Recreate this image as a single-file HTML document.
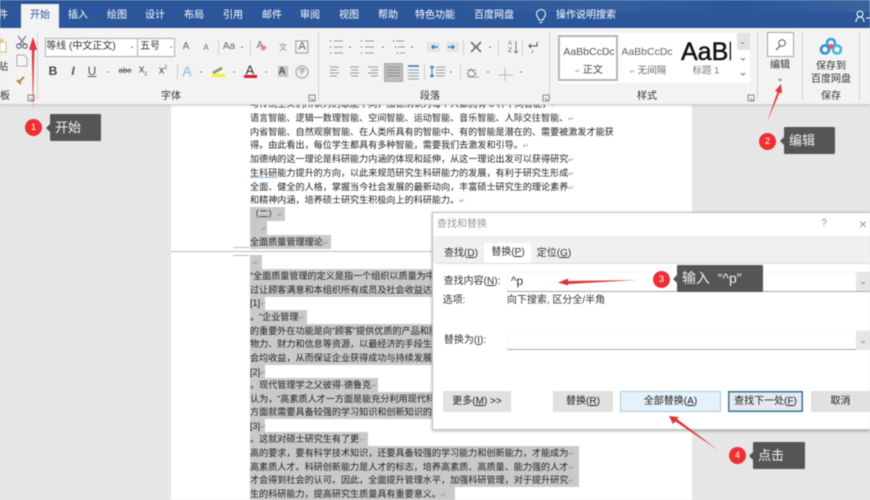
<!DOCTYPE html>
<html lang="zh-CN"><head><meta charset="utf-8">
<style>
html,body{margin:0;padding:0;width:870px;height:500px;overflow:hidden;background:#e6e6e6}
body{font-family:"Liberation Sans","Noto Sans CJK SC",sans-serif;position:relative}
#w{position:absolute;left:0;top:0;width:870px;height:500px;overflow:hidden;filter:blur(.45px)}
.a{position:absolute}
.t{position:absolute;white-space:nowrap;transform:translate(-50%,-50%);line-height:1}
.tab{color:#fff;font-size:10px;top:16px}
.l{position:absolute;left:250px;height:14px;line-height:14px;font-size:9.1px;color:#222;white-space:nowrap;overflow:hidden}
.s{background:#c9c9c9}
.r{color:#999;font-size:7px}
.g{font-size:10px;color:#333;top:97px}
.btn{position:absolute;top:391px;height:21px;line-height:21px;text-align:center;font-size:10px;color:#222;background:#e1e1e1;box-sizing:border-box}
.lab{position:absolute;background:#555;color:#f2f2f2;font-size:13px;height:27px;line-height:27px;border-radius:1px;box-sizing:border-box;padding-left:5px;white-space:nowrap}
.lab:before{content:"";position:absolute;left:-4px;top:10px;border:4px solid transparent;border-right-color:#555;border-left:0}
.bd{position:absolute;width:17px;height:17px;border-radius:50%;background:#ee2f33;color:#fff;font-size:9px;line-height:17px;text-align:center}
</style></head><body><div id="w">

<!-- document -->
<div class="a" style="left:171px;top:105px;width:521px;height:395px;background:#fff"></div>
<div class="a" style="left:171px;top:251px;width:521px;height:1px;background:#bdbdbd"></div>
<div class="a" style="left:233px;top:247px;width:16px;height:1px;background:#bbb"></div>
<div class="a" style="left:233px;top:255px;width:16px;height:1px;background:#bbb"></div>

<div class="l" style="top:97px">与传统主义们所认为的歌能不同，加德纳认为每个人都拥有 8 种不同智能，<span class="r">↵</span></div>
<div class="l" style="top:111px">语言智能、逻辑一数理智能、空间智能、运动智能、音乐智能、人际交往智能、<span class="r">↵</span></div>
<div class="l" style="top:125px">内省智能、自然观察智能、在人类所具有的智能中、有的智能是潜在的、需要被激发才能获</div>
<div class="l" style="top:138px">得。由此看出，每位学生都具有多种智能，需要我们去激发和引导。<span class="r">↵</span></div>
<div class="l" style="top:152px">加德纳的这一理论是科研能力内涵的体现和延伸，从这一理论出发可以获得研究<span class="r">↵</span></div>
<div class="l" style="top:166px">生科研能力提升的方向，以此来规范研究生科研能力的发展，有利于研究生形成<span class="r">↵</span></div>
<div class="l" style="top:180px">全面、健全的人格，掌握当今社会发展的最新动向，丰富硕士研究生的理论素养<span class="r">↵</span></div>
<div class="l" style="top:193px">和精神内涵，培养硕士研究生积极向上的科研能力。<span class="r">↵</span></div>
<div class="a" style="left:250px;top:177px;width:27px;height:1px;background:#8fb4dc"></div>
<div class="l s" style="top:207px;width:35px">（二）<span class="r">↵</span></div>
<div class="l s" style="top:221px;width:17px;text-align:right"><span class="r">↵</span></div>
<div class="l s" style="top:235px;width:81px">全面质量管理理论<span class="r">↵</span></div>
<div class="l s" style="top:255px;width:12px;text-align:center"><span class="r">↵</span></div>
<div class="l s" style="top:269px;width:190px">“全面质量管理的定义是指一个组织以质量为中心，</div>
<div class="l s" style="top:283px;width:190px">过让顾客满意和本组织所有成员及社会收益达到长期</div>
<div class="l s" style="top:296px;width:15px">[1]<span class="r">↵</span></div>
<div class="l s" style="top:310px;width:57px">。“企业管理<span class="r">↵</span></div>
<div class="l s" style="top:324px;width:190px">的重要外在功能是向“顾客”提供优质的产品和服务，</div>
<div class="l s" style="top:337px;width:190px">物力、财力和信息等资源，以最经济的手段生产出</div>
<div class="l s" style="top:351px;width:190px">会均收益，从而保证企业获得成功与持续发展的一</div>
<div class="l s" style="top:365px;width:15px">[2]<span class="r">↵</span></div>
<div class="l s" style="top:378px;width:128px">。现代管理学之父彼得·德鲁克<span class="r">↵</span></div>
<div class="l s" style="top:392px;width:190px">认为，“高素质人才一方面是能充分利用现代科技</div>
<div class="l s" style="top:405px;width:190px">方面就需要具备较强的学习知识和创新知识的能力</div>
<div class="l s" style="top:419px;width:15px">[3]<span class="r">↵</span></div>
<div class="l s" style="top:432px;width:118px">。这就对硕士研究生有了更<span class="r">↵</span></div>
<div class="l s" style="top:446px;width:329px">高的要求，要有科学技术知识，还要具备较强的学习能力和创新能力，才能成为<span class="r">↵</span></div>
<div class="l s" style="top:460px;width:329px">高素质人才。科研创新能力是人才的标志，培养高素质、高质量、能力强的人才<span class="r">↵</span></div>
<div class="l s" style="top:473px;width:329px">才会得到社会的认可。因此，全面提升管理水平，加强科研管理，对于提升研究<span class="r">↵</span></div>
<div class="l s" style="top:487px;width:205px">生的科研能力，提高研究生质量具有重要意义。<span class="r">↵</span></div>

<!-- title/tabs -->
<div class="a" style="left:0;top:0;width:870px;height:29px;background:#2b579a"></div>
<div class="a" style="left:430px;top:0;width:440px;height:12px;background:linear-gradient(90deg,#2b579a,#355f9f 40%,#2b579a 70%,#3a63a0)"></div>
<!-- ribbon -->
<div class="a" style="left:0;top:28px;width:870px;height:77px;background:#f3f3f3;border-bottom:1px solid #d2d2d2;box-sizing:border-box;box-shadow:0 1px 2px rgba(0,0,0,.12)"></div>
<div class="a" style="left:21px;top:4px;width:38px;height:25px;background:#f3f3f3"></div>
<div class="t tab" style="left:3px">件</div>
<div class="t tab" style="left:40px;color:#2b579a">开始</div>
<div class="t tab" style="left:78px">插入</div>
<div class="t tab" style="left:117px">绘图</div>
<div class="t tab" style="left:155px">设计</div>
<div class="t tab" style="left:194px">布局</div>
<div class="t tab" style="left:233px">引用</div>
<div class="t tab" style="left:272px">邮件</div>
<div class="t tab" style="left:310px">审阅</div>
<div class="t tab" style="left:349px">视图</div>
<div class="t tab" style="left:388px">帮助</div>
<div class="t tab" style="left:435px">特色功能</div>
<div class="t tab" style="left:494px">百度网盘</div>
<div class="t tab" style="left:586px">操作说明搜索</div>

<!-- boxes -->
<div class="a" style="left:45px;top:38px;width:93px;height:19px;background:#fff;border:1px solid #ababab;box-sizing:border-box"></div>
<div class="a" style="left:137px;top:38px;width:38px;height:19px;background:#fff;border:1px solid #ababab;box-sizing:border-box"></div>
<div class="t" style="left:81px;top:47px;font-size:10px;color:#333">等线 (中文正文)</div>
<div class="t" style="left:150px;top:47px;font-size:10px;color:#333">五号</div>
<div class="a" style="left:384px;top:63px;width:19px;height:19px;background:#bdbdbd;border:1px solid #a8a8a8;box-sizing:border-box"></div>
<div class="a" style="left:278px;top:66px;width:10px;height:11px;background:#c6c6c6"></div>

<!-- styles -->
<div class="a" style="left:558px;top:33px;width:192px;height:50px;background:#fff"></div>
<div class="a" style="left:558px;top:35px;width:60px;height:46px;border:2px solid #b5b5b5;box-sizing:border-box"></div>
<div class="a" style="left:737px;top:33px;width:13px;height:17px;background:#e2e2e2"></div>
<div class="t" style="left:589px;top:52px;font-size:10.5px;color:#555">AaBbCcDc</div>
<div class="t" style="left:647px;top:52px;font-size:10.5px;color:#666">AaBbCcDc</div>
<div class="a" style="left:681px;top:38px;width:50px;height:28px;overflow:hidden;font-size:25px;-webkit-text-stroke:.5px #111;line-height:28px;color:#111;white-space:nowrap">AaBbC</div>
<div class="t" style="left:589px;top:71px;font-size:10px;color:#444"><span style="font-size:6px;color:#888">↵</span> 正文</div>
<div class="t" style="left:648px;top:71px;font-size:9.5px;color:#666"><span style="font-size:6px;color:#888">↵</span> 无间隔</div>
<div class="t" style="left:706px;top:71px;font-size:9.5px;color:#777">标题 1</div>

<!-- search + save -->
<div class="a" style="left:767px;top:32px;width:27px;height:25px;background:#fff;border:1px solid #a5a5a5;box-sizing:border-box"></div>
<div class="t" style="left:780px;top:66px;font-size:10px;color:#333">编辑</div>
<div class="t" style="left:831px;top:67px;font-size:10px;color:#333">保存到</div>
<div class="t" style="left:831px;top:80px;font-size:10px;color:#333">百度网盘</div>
<div class="t g" style="left:831px">保存</div>
<div class="t g" style="left:171px">字体</div>
<div class="t g" style="left:430px">段落</div>
<div class="t g" style="left:647px">样式</div>
<div class="t g" style="left:5px">板</div>
<div class="t" style="left:3px;top:68px;font-size:10px;color:#333">贴</div>

<!-- row text icons -->
<div class="t" style="left:53px;top:71px;font-size:12px;font-weight:bold;color:#444">B</div>
<div class="t" style="left:73px;top:71px;font-size:12px;font-style:italic;font-weight:bold;color:#555">I</div>
<div class="t" style="left:92px;top:71px;font-size:12px;text-decoration:underline;color:#555">U</div>
<div class="t" style="left:125px;top:71px;font-size:8px;text-decoration:line-through;color:#555">abc</div>
<div class="t" style="left:143px;top:71px;font-size:11px;color:#444">x<sub style="font-size:5px">2</sub></div>
<div class="t" style="left:163px;top:71px;font-size:11px;color:#444">x<sup style="font-size:5px">2</sup></div>
<div class="t" style="left:187px;top:71px;font-size:14px;color:#8fb4dc">A</div>
<div class="t" style="left:250px;top:70px;font-size:13px;color:#333">A</div>
<div class="t" style="left:282px;top:72px;font-size:10px;font-weight:bold;color:#555">A</div>
<div class="t" style="left:186px;top:47px;font-size:10px;color:#666">A</div>
<div class="t" style="left:206px;top:48px;font-size:8px;color:#666">A</div>
<div class="t" style="left:229px;top:47px;font-size:10px;color:#666">Aa</div>
<div class="t" style="left:260px;top:46px;font-size:10px;color:#5a6f88">A</div>
<div class="t" style="left:302px;top:47px;font-size:11px;color:#666;border:1px solid #999;padding:0 2px">A</div>
<div class="t" style="left:283px;top:48px;font-size:8px;color:#888">文</div>
<div class="t" style="left:302px;top:72px;font-size:7px;color:#777;border:1px solid #999;border-radius:50%;width:11px;height:11px;line-height:11px;text-align:center">字</div>
<div class="t" style="left:510px;top:44px;font-size:6.5px;color:#5a7fa5">A</div>
<div class="t" style="left:510px;top:51px;font-size:6.5px;color:#555">Z</div>

<svg class="a" style="left:0;top:0" width="870" height="105" fill="none">
 <!-- separators -->
 <g stroke="#cfcfcf"><path d="M37.500 33V100M318.500 33V100M549.500 33V100M757.500 33V100M802.500 33V100M859.500 33V100M218.500 40V55M250.500 40V55M177.500 64V80M463.500 40V55M498.500 40V55M522.500 40V55M424.500 64V80M460.500 64V80"/></g>
 <!-- cut/copy/paste -->
 <path d="M18 36l7 9M26 36l-7 9" stroke="#556" stroke-width="1"/><circle cx="19" cy="46" r="2.300" stroke="#456"/><circle cx="25" cy="46" r="2.300" stroke="#456"/>
 <path d="M17 55h7l3 3v8h-10z" stroke="#aaa" fill="#f8f8f8"/>
 <path d="M19 82l5-5M17 80l4 4" stroke="#b08a45" stroke-width="2"/>
 <path d="M0 42h6v10H0z" fill="#fff" stroke="#d6b887"/><path d="M0 39h3v4H0z" fill="#e4bd7c"/>
 <!-- lightbulb -->
 <path d="M539 20c0-2-2.500-3-2.500-6a4.500 4.500 0 0 1 9 0c0 3-2.500 4-2.500 6zM539.500 22.500h3" stroke="#fff"/>
 <!-- person -->
 <circle cx="860" cy="14" r="3" stroke="#fff"/><path d="M856 22c0-3 2-5 4-5s4 2 4 5M866 18h4" stroke="#fff"/>
 <!-- font colors -->
 <path d="M212 75.500h13" stroke="#f6ee3a" stroke-width="3"/>
 <path d="M212 72l9-5 2 2-9 5z" fill="#8a9a6a"/>
 <path d="M244 76.500h13" stroke="#d51f26" stroke-width="3"/>
 <path d="M260 48l4-3 3 3-4 3z" fill="#e58a9c"/>
 <!-- carets -->
 <g stroke="#777"><path d="M131 47h2M170 47h2M241 47h2M107 72h2M200 72h2M233 72h2M265 72h2M349 47h2M382 47h2M411 47h2M489 47h2M450 72h2M487 72h2M520 72h2"/></g>
 <!-- lists -->
 <g stroke="#9a9a9a">
  <path d="M334 41h9M334 47h9M334 53h9M365 41h9M365 47h9M365 53h9M396 41h8M398 47h7M400 53h5"/>
  <path d="M330 41h1M330 47h1M330 53h1M361 41h1M361 47h1M361 53h1M393 41h1M395 47h1M397 53h1" stroke="#445"/>
  <path d="M330 67h9M330 70h7M330 73h9M330 76h7M350 67h9M351 70h7M350 73h9M351 76h7M368 67h10M371 70h7M368 73h10M371 76h7"/>
  <path d="M387 67h13M387 70h13M387 73h13M387 76h13" stroke="#8f8f8f"/>
  <path d="M408 70h11M408 73h11M408 76h11M408 79h11" stroke="#8b9bb0"/>
  <path d="M436 67h9M436 70h9M436 73h9M436 76h9M467 70h9M467 77h12"/>
  <path d="M498 75h15M505 68v13" stroke="#bbb"/>
 </g>
 <path d="M408 66h11" stroke="#2f6fa8" stroke-width="1.500"/>
 <path d="M432 66v11M430 68l2-2 2 2M430 75l2 2 2-2" stroke="#2f6fa8"/>
 <path d="M427 42h13v10h-13zM446 42h13v10h-13z" fill="#dfe5ea"/>
 <path d="M438 47h-6M434 45l-2 2 2 2" stroke="#2077b5" stroke-width="1.200"/>
 <path d="M448 47h6M452 45l2 2-2 2" stroke="#2077b5" stroke-width="1.200"/>
 <path d="M471 42l10 10M481 42l-10 10" stroke="#555" stroke-width="1.300"/>
 <path d="M473 47h6" stroke="#999"/>
 <path d="M516 41v12M514 51l2 2 2-2" stroke="#5a7fa5"/>
 <path d="M533 46h-4M537 42v4h-5M531 44l-2 2 2 2" stroke="#555"/>
 <path d="M533 50l-1 3" stroke="#888"/>
 <path d="M467 74l4-5 5 5-4 3z" stroke="#888"/>
 <!-- dialog launchers -->
 <g stroke="#888"><path d="M28 95h6v6h-6zM30 98l3 3M309 95h6v6h-6zM311 98l3 3M543 95h6v6h-6zM545 98l3 3M748 95h6v6h-6zM750 98l3 3"/></g>
 <!-- gallery scroll -->
 <path d="M741 43h3M741 58l2 2 2-2M741 73l2 2 2-2" stroke="#777"/>
 <!-- magnifier -->
 <circle cx="782" cy="43" r="3.300" stroke="#556"/><path d="M780 46l-4 4" stroke="#8a6a4a" stroke-width="1.400"/>
 <path d="M778.500 79l1.500 1.500 1.500-1.500" stroke="#666"/>
 <!-- baidu cloud -->
 <circle cx="831" cy="43" r="4" stroke="#3f9fe0" stroke-width="2.600"/>
 <circle cx="825" cy="49.500" r="4" stroke="#2f8fd8" stroke-width="2.600"/>
 <circle cx="837" cy="49.500" r="4" stroke="#42b7d8" stroke-width="2.600"/>
 <circle cx="831" cy="46.500" r="2.500" fill="#e25a6a"/>
</svg>

<!-- dialog -->
<div class="a" style="left:432px;top:212px;width:438px;height:218px;background:#fff;border:1px solid #c0c0c0;border-right:0;box-sizing:border-box;box-shadow:0 1px 3px rgba(0,0,0,.3)"></div>
<div class="a" style="left:433px;top:236px;width:437px;height:27px;background:#f0f0f0"></div>
<div class="a" style="left:484px;top:243px;width:47px;height:20px;background:#fff"></div>
<div class="a" style="left:437px;top:263px;width:433px;height:1px;background:#dcdcdc"></div>
<div class="t" style="left:462px;top:225px;font-size:10px;color:#999">查找和替换</div>
<div class="t" style="left:824px;top:224px;font-size:10px;color:#888">?</div>
<div class="t" style="left:863px;top:224px;font-size:14px;color:#999">×</div>
<div class="t" style="left:461px;top:254px;font-size:10px;color:#333">查找(<u>D</u>)</div>
<div class="t" style="left:508px;top:253px;font-size:10px;color:#333">替换(<u>P</u>)</div>
<div class="t" style="left:554px;top:254px;font-size:10px;color:#333">定位(<u>G</u>)</div>
<div class="t" style="left:472px;top:282px;font-size:10px;color:#333">查找内容(<u>N</u>):</div>
<div class="t" style="left:454px;top:301px;font-size:10px;color:#333">选项:</div>
<div class="t" style="left:556px;top:301px;font-size:10px;color:#333">向下搜索, 区分全/半角</div>
<div class="t" style="left:465px;top:341px;font-size:10px;color:#333">替换为(<u>I</u>):</div>
<div class="a" style="left:507px;top:272px;width:363px;height:20px;background:#fff;border-bottom:1px solid #adadad;box-sizing:border-box;box-shadow:inset 0 0 1px #ccc"></div>
<div class="a" style="left:507px;top:330px;width:363px;height:20px;background:#fff;border-bottom:1px solid #adadad;box-sizing:border-box;box-shadow:inset 0 0 1px #ccc"></div>
<div class="a" style="left:856px;top:272px;width:14px;height:19px;background:#e6e6e6;color:#777;font-size:9px;line-height:19px;text-align:center">⌄</div>
<div class="a" style="left:856px;top:331px;width:14px;height:19px;background:#e6e6e6;color:#777;font-size:9px;line-height:19px;text-align:center">⌄</div>
<div class="t" style="left:517px;top:281px;font-size:12px;color:#333">^p</div>
<div class="btn" style="left:443px;width:68px">更多(<u>M</u>) &gt;&gt;</div>
<div class="btn" style="left:553px;width:60px">替换(<u>R</u>)</div>
<div class="btn" style="left:620px;width:101px;background:#e5f1fb;box-shadow:inset 0 0 0 1px #a6cbdc">全部替换(<u>A</u>)</div>
<div class="btn" style="left:728px;width:75px;background:#e3e9ee;box-shadow:inset 0 0 0 1.500px #3a7396">查找下一处(<u>F</u>)</div>
<div class="btn" style="left:811px;width:59px">取消</div>

<!-- arrows -->
<svg class="a" style="left:0;top:0" width="870" height="500" fill="none">
 <path d="M33 109L31.800 50L29 50L33 37L37 50L34.400 50Z" fill="#e8343a"/>
 <path d="M767 122L777.500 92L775 91L781 84L782 93.500L779.500 92.800Z" fill="#e0353a"/>
 <path d="M637 280L568 281L568 278.500L558 282.500L568 285.500L568 284Z" fill="#d9363a"/>
 <path d="M718 450L677 419L679 417L669 416L673 424L675.500 421.500Z" fill="#dd3438"/>
</svg>

<!-- annotations -->
<div class="bd" style="left:25px;top:119px">1</div>
<div class="lab" style="left:50px;top:114px;width:51px">开始</div>
<div class="bd" style="left:759px;top:133px">2</div>
<div class="lab" style="left:784px;top:127px;width:51px">编辑</div>
<div class="bd" style="left:653px;top:271px">3</div>
<div class="lab" style="left:677px;top:265px;width:86px;font-size:14px">输入&nbsp;&nbsp;“^p”</div>
<div class="bd" style="left:729px;top:447px">4</div>
<div class="lab" style="left:753px;top:442px;width:52px">点击</div>

</div></body></html>
